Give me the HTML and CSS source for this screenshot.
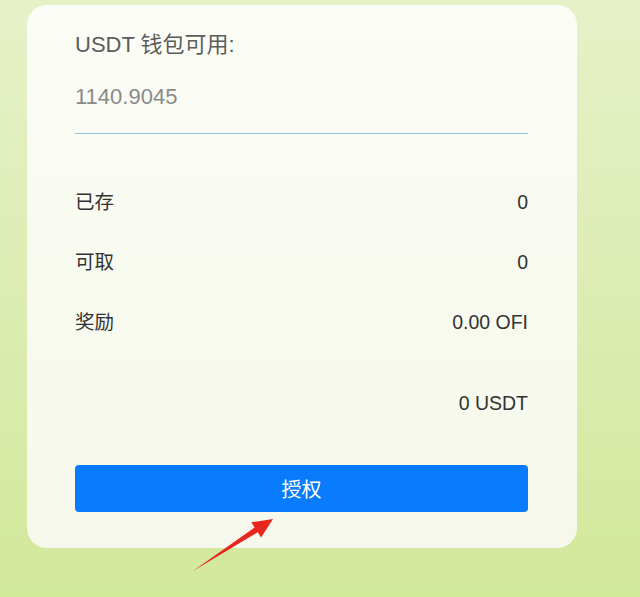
FILE: index.html
```html
<!DOCTYPE html>
<html lang="zh-CN">

<head>
    <meta charset="UTF-8">
    <meta name="viewport" content="width=device-width, initial-scale=1.0">
    <title>USDT</title>
    <link rel="stylesheet" href="styles.css">
</head>

<body>
    <div class="card">
        <div class="wallet-label">USDT 钱包可用:</div>
        <div class="wallet-balance">1140.9045</div>

        <div class="row first">
            <span>已存</span>
            <span>0</span>
        </div>
        <div class="row">
            <span>可取</span>
            <span>0</span>
        </div>
        <div class="row">
            <span>奖励</span>
            <span>0.00 OFI</span>
        </div>
        <div class="row total">
            <span></span>
            <span>0 USDT</span>
        </div>

        <button class="btn-approve">授权</button>
    </div>

    <!-- annotation arrow -->
    <svg class="arrow" width="640" height="597" viewBox="0 0 640 597">
        <polygon points="193,571 254.6,527.6 251.3,522.3 273,519 261.1,537.5 257.8,532.2" fill="#e8261c" />
    </svg>
</body>

</html>
```

FILE: styles.css
```css
* {
    margin: 0;
    padding: 0;
    box-sizing: border-box;
    font-family: "Liberation Sans", "Noto Sans CJK SC", sans-serif;
}

body {
    position: relative;
    min-height: 597px;
    overflow: hidden;
    background: linear-gradient(#e6f1c8, #d2e89b);
}

.card {
    display: flex;
    flex-direction: column;
    width: 550px;
    margin: 5px 0 0 27px;
    padding: 25px 49px 36px 48px;
    background: linear-gradient(#fbfdf6, #f5f8ea);
    border-radius: 20px;
}

.wallet-label {
    font-size: 22px;
    line-height: 30px;
    color: #5c5c5c;
}

.wallet-balance {
    margin-top: 22px;
    padding-bottom: 21px;
    font-size: 22px;
    line-height: 30px;
    color: #8a8a8a;
    border-bottom: 1px solid #8fc6e2;
}

.row {
    display: flex;
    justify-content: space-between;
    margin-top: 30px;
    font-size: 19.5px;
    line-height: 30px;
    color: #333;
}

.row.first {
    margin-top: 53px;
}

.row.total {
    margin-top: 51px;
}

.btn-approve {
    margin-top: 47px;
    height: 47px;
    border: none;
    border-radius: 4px;
    background-color: #087cfc;
    color: #fff;
    font-size: 20px;
}

.arrow {
    position: absolute;
    left: 0;
    top: 0;
    pointer-events: none;
}
```
